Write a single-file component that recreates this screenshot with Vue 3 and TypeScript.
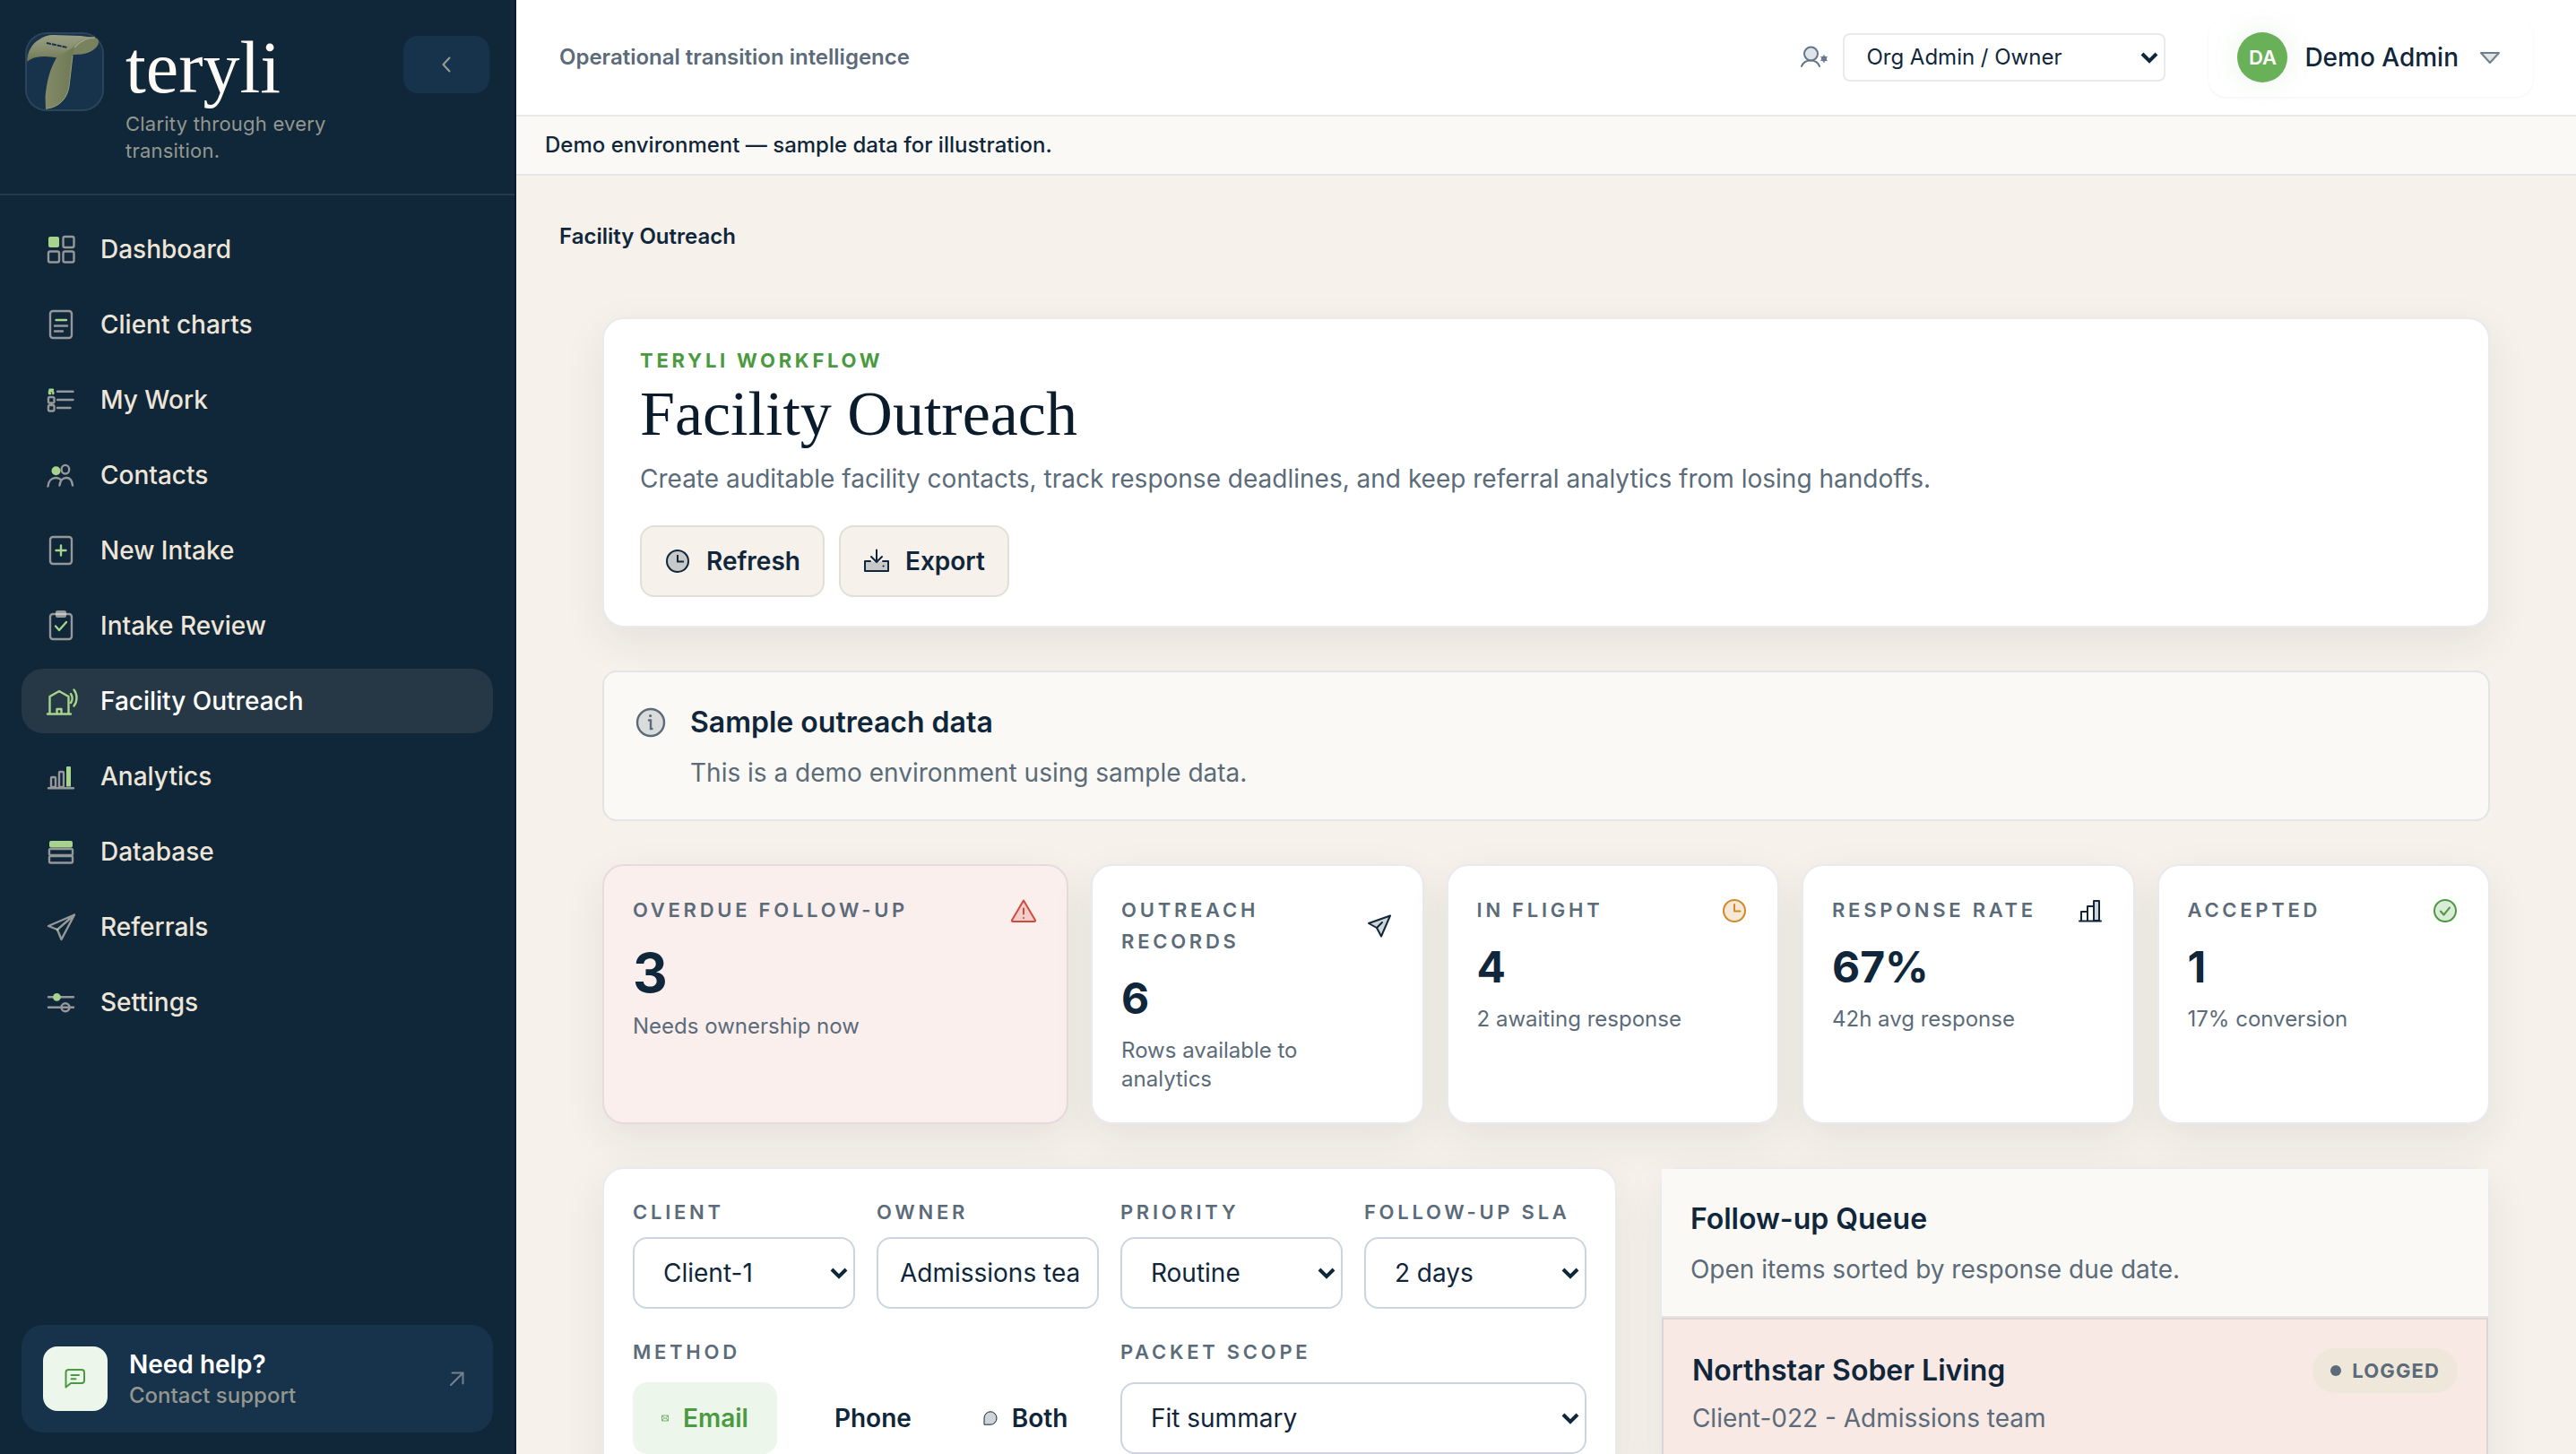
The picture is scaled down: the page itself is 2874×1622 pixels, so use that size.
<script setup lang="ts">
import { ref } from 'vue'

interface NavItem {
  label: string
  line: string
  accent?: string
  accentFill?: string
  lineFill?: string
}

interface Metric {
  label: string
  value: string
  note: string
  icon: 'alert' | 'send' | 'clock' | 'bars' | 'check'
  tone: string
  lead?: boolean
}

const navItems: NavItem[] = [
  {
    label: 'Dashboard',
    line: 'M24.5 6h8a2 2 0 0 1 2 2v8a2 2 0 0 1-2 2h-8a2 2 0 0 1-2-2v-8a2 2 0 0 1 2-2zM8 22.5h8a2 2 0 0 1 2 2v8a2 2 0 0 1-2 2h-8a2 2 0 0 1-2-2v-8a2 2 0 0 1 2-2zM24.5 22.5h8a2 2 0 0 1 2 2v8a2 2 0 0 1-2 2h-8a2 2 0 0 1-2-2v-8a2 2 0 0 1 2-2z',
    accentFill: 'M8 6h8a2 2 0 0 1 2 2v8a2 2 0 0 1-2 2h-8a2 2 0 0 1-2-2v-8a2 2 0 0 1 2-2z',
  },
  {
    label: 'Client charts',
    line: 'M11 5h18a3 3 0 0 1 3 3v24a3 3 0 0 1-3 3h-18a3 3 0 0 1-3-3v-24a3 3 0 0 1 3-3zM13 21.5h14M13 27.5h9',
    accent: 'M14.5 15h11.5',
  },
  {
    label: 'My Work',
    line: 'M16 10.7h17.500M16 20h17.500M16 29h14.500M7.500 17h3.500a1.500 1.500 0 0 1 1.500 1.500v3.500a1.500 1.500 0 0 1-1.500 1.500h-3.500a1.500 1.500 0 0 1-1.500-1.500v-3.500a1.500 1.500 0 0 1 1.500-1.500zM7.500 26h3.500a1.500 1.500 0 0 1 1.500 1.500v3.500a1.500 1.500 0 0 1-1.500 1.500h-3.500a1.500 1.500 0 0 1-1.500-1.500v-3.500a1.500 1.500 0 0 1 1.500-1.500z',
    accent: 'M7 10.500v2.500h1.200M11.300 11.500v1.500M7.500 8.800h3.500l-2 1.700',
  },
  {
    label: 'Contacts',
    line: 'M5.500 32.500c.5-6 4-9.500 9-9.500 2 0 4 .8 5.500 2.200M18.500 31.500c.5-5 3.500-8.500 7.500-8.500s6.500 3.500 7 8.500M29.200 13.700a4.300 4.800 0 1 1-8.600 0a4.300 4.800 0 1 1 8.600 0z',
    accentFill: 'M19.500 15.300a5 5 0 1 1-10 0a5 5 0 1 1 10 0z',
  },
  {
    label: 'New Intake',
    line: 'M11 5h18a3 3 0 0 1 3 3v24a3 3 0 0 1-3 3h-18a3 3 0 0 1-3-3v-24a3 3 0 0 1 3-3z',
    accent: 'M14.500 20h11M20 14.500v11',
  },
  {
    label: 'Intake Review',
    line: 'M11 7h18a3 3 0 0 1 3 3v22a3 3 0 0 1-3 3h-18a3 3 0 0 1-3-3v-22a3 3 0 0 1 3-3z',
    lineFill: 'M16 3h8a2 2 0 0 1 2 2v4a2 2 0 0 1-2 2h-8a2 2 0 0 1-2-2v-4a2 2 0 0 1 2-2z',
    accent: 'M14 20.500l4 4.500 8-9',
  },
  {
    label: 'Facility Outreach',
    line: '',
    accent: 'M5 34.500h26M7.500 34.500v-19.500l10.500-6 10.500 6v19.500M15.500 34.500v-5.500h5v5.500M31 12c2 3 2 7 0 10M34.500 7.500c4 5 4 13 0 18',
  },
  {
    label: 'Analytics',
    line: 'M6 33.300h28M10 21h3a1 1 0 0 1 1 1v10h-5v-10a1 1 0 0 1 1-1zM19 15h3a1 1 0 0 1 1 1v16h-5v-16a1 1 0 0 1 1-1z',
    accentFill: 'M27 9h3a1 1 0 0 1 1 1v21.500h-5v-21.500a1 1 0 0 1 1-1z',
  },
  {
    label: 'Database',
    line: 'M8.500 17h23a1.500 1.500 0 0 1 1.500 1.500v4a1.500 1.500 0 0 1-1.500 1.500h-23a1.500 1.500 0 0 1-1.500-1.500v-4a1.500 1.500 0 0 1 1.500-1.500zM8.500 25h23a1.500 1.500 0 0 1 1.500 1.500v4.500a1.500 1.500 0 0 1-1.500 1.500h-23a1.500 1.500 0 0 1-1.500-1.500v-4.500a1.500 1.500 0 0 1 1.500-1.500z',
    accentFill: 'M9 8h22a2 2 0 0 1 2 2v3.500a2 2 0 0 1-2 2h-22a2 2 0 0 1-2-2v-3.500a2 2 0 0 1 2-2z',
  },
  {
    label: 'Referrals',
    line: 'M35 6.500L6 19l10 4 4.500 11zM35 6.500L16 23',
    accent: 'M15.800 23h.4',
  },
  {
    label: 'Settings',
    line: 'M6 14.300h28M6 25.700h28M29.500 25.700a4.500 4.500 0 1 1-9 0a4.500 4.500 0 1 1 9 0z',
    accentFill: 'M19.800 14.300a4.400 4.400 0 1 1-8.800 0a4.400 4.400 0 1 1 8.800 0z',
  },
]

const metrics: Metric[] = [
  { label: 'Overdue follow-up', value: '3', note: 'Needs ownership now', icon: 'alert', tone: '#d04a3e', lead: true },
  { label: 'Outreach records', value: '6', note: 'Rows available to analytics', icon: 'send', tone: '#10263a' },
  { label: 'In flight', value: '4', note: '2 awaiting response', icon: 'clock', tone: '#cf8a2c' },
  { label: 'Response rate', value: '67%', note: '42h avg response', icon: 'bars', tone: '#10263a' },
  { label: 'Accepted', value: '1', note: '17% conversion', icon: 'check', tone: '#4a9a3f' },
]

const activeNav = ref('Facility Outreach')
const role = ref('Org Admin / Owner')
const client = ref('Client-1')
const owner = ref('Admissions team')
const priority = ref('Routine')
const sla = ref('2 days')
const scope = ref('Fit summary')
const method = ref('Email')
</script>

<template>
  <div class="shell">
    <aside class="sidebar">
      <div class="brand">
        <svg class="logo" viewBox="0 0 88 88" aria-hidden="true">
          <defs>
            <linearGradient id="ribbon-arm" x1="0" y1="0" x2="0" y2="1">
              <stop offset="0" stop-color="#9a9f84" />
              <stop offset="0.550" stop-color="#868d6d" />
              <stop offset="1" stop-color="#6c7652" />
            </linearGradient>
            <linearGradient id="ribbon-stem" x1="0" y1="0" x2="1" y2="0">
              <stop offset="0" stop-color="#828a68" />
              <stop offset="1" stop-color="#6f7955" />
            </linearGradient>
          </defs>
          <path d="M2.300 33C2 22 8 12 16 8C21 4.500 25 3 32 3L62 4L77 6L56 24.700L36 28.500C28 27 20 26.500 12 28C8 29 5 30.500 2.300 33z" fill="url(#ribbon-arm)" />
          <path d="M52 18C60 9 68 5 77 5.700C83 7 83 12 80 16C75 22 66 25.500 54 24.700z" fill="#78825f" />
          <path d="M55 17C62 9 70 5.500 78 6" fill="none" stroke="#a0a587" stroke-width="1.500" />
          <path d="M35 28.500L55 16L53 27L49 60.700C47 74 38 84 23 85.700L22.500 72C24 55 28 40 35 28.500z" fill="url(#ribbon-stem)" />
          <path d="M53 26L49 60.700C47 74 38 83.500 23.500 85.200" fill="none" stroke="#979c7e" stroke-width="1" />
          <path d="M24 12L47 17" fill="none" stroke="#17324b" stroke-width="2" stroke-dasharray="5 1" />
        </svg>
        <div class="brand-text">
          <span class="wordmark">teryli</span>
          <span class="tagline">Clarity through every transition.</span>
        </div>
        <button class="collapse" type="button" aria-label="Collapse navigation">
          <svg width="40" height="40" viewBox="0 0 40 40" fill="none" stroke="#989c9b" stroke-width="2" stroke-linecap="round" stroke-linejoin="round"><path d="M23.500 12.500L16.500 20l7 7.500" /></svg>
        </button>
      </div>

      <nav class="nav">
        <a v-for="item in navItems" :key="item.label" href="#" class="nav-link" :class="{ active: item.label === activeNav }" @click.prevent="activeNav = item.label">
          <svg width="40" height="40" viewBox="0 0 40 40" fill="none" stroke-width="2.400" stroke-linecap="round" stroke-linejoin="round" aria-hidden="true">
            <path v-if="item.line" :d="item.line" stroke="#ede5d8" stroke-opacity="0.600" />
            <path v-if="item.lineFill" :d="item.lineFill" fill="#ede5d8" fill-opacity="0.600" />
            <path v-if="item.accent" :d="item.accent" stroke="#a8d38d" />
            <path v-if="item.accentFill" :d="item.accentFill" fill="#a8d38d" />
          </svg>
          <span>{{ item.label }}</span>
        </a>
      </nav>

      <a href="#" class="help" @click.prevent>
        <span class="help-icon">
          <svg width="32" height="32" viewBox="0 0 32 32" fill="none" stroke="#4a9a3f" stroke-width="2" stroke-linecap="round" stroke-linejoin="round"><path d="M8 6h15a3 3 0 0 1 3 3v9a3 3 0 0 1-3 3h-12l-5.500 4.500v-16.500a3 3 0 0 1 2.500-3zM11.500 12h8.500M11.500 16.200h5" /></svg>
        </span>
        <span class="help-text">
          <strong>Need help?</strong>
          <span>Contact support</span>
        </span>
        <svg width="32" height="32" viewBox="0 0 32 32" fill="none" stroke="#74838e" stroke-width="2" stroke-linecap="round"><path d="M9 23L22.500 9.500M10.500 9.500h12v12" /></svg>
      </a>
    </aside>

    <div class="main">
      <header class="topbar">
        <span class="topbar-title">Operational transition intelligence</span>
        <div class="topbar-right">
          <div class="role">
            <label for="role" aria-label="Role">
              <svg width="32" height="32" viewBox="0 0 32 32" fill="none" stroke="#64748b" stroke-width="2" stroke-linecap="round" aria-hidden="true"><circle cx="12.500" cy="12" r="7.500" fill="#64748b" fill-opacity="0.200" /><path d="M2 26c1.500-4 5-6.500 10-6.500s8.500 2.500 10 6.500" /><circle cx="27" cy="17.500" r="2" /><path d="M27 13.500v8M23.800 15.500l6.400 4M30.200 15.500l-6.400 4" stroke-width="1.200" /></svg>
            </label>
            <span class="select-wrap compact">
              <select id="role" v-model="role">
                <option>Org Admin / Owner</option>
                <option>Case Manager</option>
              </select>
              <svg class="caret" width="20" height="14" viewBox="0 0 20 14" fill="none" stroke="#10263a" stroke-width="4"><path d="M2 3l8 8 8-8" /></svg>
            </span>
          </div>
          <button class="profile" type="button">
            <span class="avatar">DA</span>
            <span>Demo Admin</span>
            <svg width="32" height="32" viewBox="0 0 32 32" fill="#6e7f8c" fill-opacity="0.200" stroke="#6e7f8c" stroke-width="2" stroke-linejoin="round"><path d="M6 11h20l-10 11z" /></svg>
          </button>
        </div>
      </header>

      <div class="banner">Demo environment — sample data for illustration.</div>
      <div class="crumb">Facility Outreach</div>

      <main class="content">
        <section class="card hero">
          <p class="eyebrow">Teryli workflow</p>
          <h1>Facility Outreach</h1>
          <p class="lede">Create auditable facility contacts, track response deadlines, and keep referral analytics from losing handoffs.</p>
          <div class="actions">
            <button type="button" class="btn">
              <svg width="32" height="32" viewBox="0 0 32 32" fill="none" stroke="#10263a" stroke-width="2"><circle cx="16" cy="16" r="12" fill="#10263a" fill-opacity="0.200" /><path d="M16 9v7.500h7" /></svg>
              Refresh
            </button>
            <button type="button" class="btn">
              <svg width="32" height="32" viewBox="0 0 32 32" fill="none" stroke="#10263a" stroke-width="2" stroke-linecap="round" stroke-linejoin="round"><path d="M9 16h-6v11h26v-11h-6l-7 1z" fill="#10263a" fill-opacity="0.200" stroke="none" /><path d="M9 16h-6v11h26v-11h-6M16 3.500v13M10 11l6 6 6-6M23.500 21.500h.2" /></svg>
              Export
            </button>
          </div>
        </section>

        <section class="notice">
          <svg width="36" height="36" viewBox="0 0 36 36" fill="none" stroke="#5b6b79" stroke-width="2.400" stroke-linecap="round"><circle cx="18" cy="18" r="15" fill="#5b6b79" fill-opacity="0.200" /><path d="M16 15.500h2v9.500h1.500" /><path d="M17.500 10.500h.2" stroke-width="3" /></svg>
          <div>
            <h2>Sample outreach data</h2>
            <p>This is a demo environment using sample data.</p>
          </div>
        </section>

        <section class="metrics">
          <article v-for="m in metrics" :key="m.label" class="card metric" :class="{ lead: m.lead }">
            <div class="metric-head">
              <h3>{{ m.label }}</h3>
              <svg width="32" height="32" viewBox="0 0 32 32" fill="none" :stroke="m.tone" stroke-width="2" stroke-linecap="round" stroke-linejoin="round" aria-hidden="true">
                <template v-if="m.icon === 'alert'">
                  <path d="M16 4.500l13 22a1 1 0 0 1-1 1.500h-24a1 1 0 0 1-1-1.500z" :fill="m.tone" fill-opacity="0.200" />
                  <path d="M16 13.500v6M16 24h.1" />
                </template>
                <template v-else-if="m.icon === 'send'">
                  <path d="M28 4.500L4 13l9 5 5 9.500z" :fill="m.tone" fill-opacity="0.200" />
                  <path d="M13 18l6-6" />
                </template>
                <template v-else-if="m.icon === 'clock'">
                  <circle cx="16" cy="16" r="12" :fill="m.tone" fill-opacity="0.200" />
                  <path d="M16 9v7.500h6.500" />
                </template>
                <template v-else-if="m.icon === 'bars'">
                  <path d="M20 27v-22h6v22z" :fill="m.tone" fill-opacity="0.200" />
                  <path d="M4 27.500h24M6 27v-10h7M13 27v-16h7" />
                </template>
                <template v-else>
                  <circle cx="16" cy="16" r="12" :fill="m.tone" fill-opacity="0.200" />
                  <path d="M11 16.500l3.500 4 6.500-8" />
                </template>
              </svg>
            </div>
            <p class="value">{{ m.value }}</p>
            <p class="note">{{ m.note }}</p>
          </article>
        </section>

        <section class="columns">
          <form class="card form" @submit.prevent>
            <div class="field">
              <label for="client">Client</label>
              <span class="select-wrap">
                <select id="client" v-model="client"><option>Client-1</option><option>Client-022</option></select>
                <svg class="caret" width="20" height="14" viewBox="0 0 20 14" fill="none" stroke="#10263a" stroke-width="4"><path d="M2 3l8 8 8-8" /></svg>
              </span>
            </div>
            <div class="field">
              <label for="owner">Owner</label>
              <input id="owner" v-model="owner" type="text" />
            </div>
            <div class="field">
              <label for="priority">Priority</label>
              <span class="select-wrap">
                <select id="priority" v-model="priority"><option>Routine</option><option>Urgent</option></select>
                <svg class="caret" width="20" height="14" viewBox="0 0 20 14" fill="none" stroke="#10263a" stroke-width="4"><path d="M2 3l8 8 8-8" /></svg>
              </span>
            </div>
            <div class="field">
              <label for="sla">Follow-up SLA</label>
              <span class="select-wrap">
                <select id="sla" v-model="sla"><option>2 days</option><option>5 days</option></select>
                <svg class="caret" width="20" height="14" viewBox="0 0 20 14" fill="none" stroke="#10263a" stroke-width="4"><path d="M2 3l8 8 8-8" /></svg>
              </span>
            </div>
            <div class="field wide" role="group" aria-labelledby="method-label">
              <span id="method-label" class="label">Method</span>
              <div class="methods">
                <button type="button" :class="{ on: method === 'Email' }" :aria-pressed="method === 'Email'" @click="method = 'Email'">
                  <svg width="8" height="8" viewBox="0 0 8 8" fill="none" stroke="currentColor" stroke-width="1" stroke-opacity="0.700"><path d="M.5 1h7v6h-7zM.5 1l3.500 3.500 3.500-3.500M.5 7l2.500-3M7.500 7l-2.500-3" /></svg>
                  Email
                </button>
                <button type="button" :class="{ on: method === 'Phone' }" :aria-pressed="method === 'Phone'" @click="method = 'Phone'">
                  <svg width="0" height="8" />
                  Phone
                </button>
                <button type="button" :class="{ on: method === 'Both' }" :aria-pressed="method === 'Both'" @click="method = 'Both'">
                  <svg width="16" height="16" viewBox="0 0 16 16" fill="currentColor" fill-opacity="0.200" stroke="currentColor" stroke-width="1"><path d="M1 15.200v-7.200a7 7.200 0 1 1 7 7.200z" /></svg>
                  Both
                </button>
              </div>
            </div>
            <div class="field wide">
              <label for="scope">Packet scope</label>
              <span class="select-wrap">
                <select id="scope" v-model="scope"><option>Fit summary</option><option>Full packet</option></select>
                <svg class="caret" width="20" height="14" viewBox="0 0 20 14" fill="none" stroke="#10263a" stroke-width="4"><path d="M2 3l8 8 8-8" /></svg>
              </span>
            </div>
          </form>

          <section class="card queue">
            <header class="queue-head">
              <h2>Follow-up Queue</h2>
              <p>Open items sorted by response due date.</p>
            </header>
            <article class="queue-item">
              <div class="queue-row">
                <h3>Northstar Sober Living</h3>
                <span class="badge"><i></i>Logged</span>
              </div>
              <p>Client-022 - Admissions team</p>
            </article>
          </section>
        </section>
      </main>
    </div>
  </div>
</template>

<style>
body {
  margin: 0;
  background: #f6f1eb;
}
</style>

<style scoped>
* {
  box-sizing: border-box;
}

.shell {
  display: flex;
  height: 100vh;
  overflow: hidden;
  font-family: Inter, "Liberation Sans", sans-serif;
  font-size: 28px;
  line-height: 44px;
  color: #10263a;
  background: #f6f1eb;
}

h1, h2, h3, p {
  margin: 0;
}

svg {
  flex: none;
  display: block;
}

button, select, input {
  font: inherit;
  color: inherit;
}

/* Sidebar */
.sidebar {
  flex: none;
  width: 576px;
  display: flex;
  flex-direction: column;
  background: #102639;
  border-right: 2px solid #0a1c2c;
}

.brand {
  display: flex;
  align-items: flex-start;
  height: 218px;
  padding: 36px 28px 0;
  border-bottom: 2px solid #263a49;
}

.logo {
  width: 88px;
  height: 88px;
  border-radius: 24px;
  background: #17324b;
  box-shadow: inset 0 0 0 2px #2c4358;
}

.brand-text {
  flex: 1;
  display: flex;
  flex-direction: column;
  margin-left: 24px;
}

.wordmark {
  font-family: "Liberation Serif", serif;
  font-size: 82px;
  line-height: 79px;
  color: #fdfaf6;
}

.tagline {
  width: 250px;
  margin-top: 8px;
  font-size: 22px;
  line-height: 30px;
  letter-spacing: 0.01em;
  color: #93978f;
}

.collapse {
  display: grid;
  place-items: center;
  width: 96px;
  height: 64px;
  margin-top: 4px;
  padding: 0;
  border: 0;
  border-radius: 16px;
  background: #17324b;
}

.nav {
  flex: 1;
  display: flex;
  flex-direction: column;
  gap: 12px;
  padding: 24px;
}

.nav-link {
  display: flex;
  align-items: center;
  gap: 24px;
  height: 72px;
  padding: 0 24px;
  border-radius: 24px;
  font-weight: 500;
  color: #ede5d8;
  text-decoration: none;
}

.nav-link.active {
  background: #263845;
  color: #ffffff;
}

.help {
  display: flex;
  align-items: center;
  gap: 24px;
  height: 120px;
  margin: 0 24px 24px;
  padding: 0 24px;
  border-radius: 24px;
  background: #17324b;
  text-decoration: none;
}

.help-icon {
  display: grid;
  place-items: center;
  width: 72px;
  height: 72px;
  border-radius: 16px;
  background: #edf6ea;
}

.help-text {
  flex: 1;
  display: flex;
  flex-direction: column;
  padding-top: 2px;
  font-size: 24px;
  font-weight: 500;
  line-height: 34px;
  color: #93978f;
}

.help-text strong {
  font-size: 28px;
  font-weight: 600;
  line-height: 36px;
  color: #ffffff;
}

/* Top area */
.main {
  flex: 1;
  min-width: 0;
  overflow-y: auto;
  scrollbar-width: none;
}

.topbar {
  display: flex;
  align-items: center;
  justify-content: space-between;
  height: 130px;
  padding: 0 48px;
  background: #ffffff;
  border-bottom: 2px solid #e7eae9;
}

.topbar-title {
  font-size: 24px;
  font-weight: 600;
  color: #5b6b79;
}

.topbar-right,
.role {
  display: flex;
  align-items: center;
}

.topbar-right {
  gap: 48px;
}

.role {
  gap: 16px;
}

.select-wrap {
  position: relative;
  display: block;
}

select,
input {
  display: block;
  width: 100%;
  height: 80px;
  margin: 0;
  border: 2px solid #cbd5e1;
  border-radius: 16px;
  background: #ffffff;
  appearance: none;
  outline: none;
}

select {
  padding: 0 40px 0 32px;
}

input {
  padding: 0 20px 0 24px;
}

.compact {
  width: 360px;
}

.compact select {
  height: 54px;
  padding: 0 40px 0 24px;
  border-color: #e9ebeb;
  border-radius: 8px;
  font-size: 24px;
}

.caret {
  position: absolute;
  right: 8px;
  top: 50%;
  margin-top: -7px;
  pointer-events: none;
}

.profile {
  display: flex;
  align-items: center;
  gap: 19px;
  height: 88px;
  padding: 0 32px;
  border: 0;
  border-radius: 20px;
  background: #ffffff;
  box-shadow: 0 1px 3px rgba(16, 38, 58, 0.06);
  font-weight: 500;
}

.avatar {
  display: grid;
  place-items: center;
  width: 56px;
  height: 56px;
  border-radius: 50%;
  background: #68b158;
  box-shadow: 0 0 32px rgba(74, 154, 63, 0.12);
  color: #ffffff;
  font-size: 22px;
  font-weight: 600;
}

.banner {
  height: 66px;
  padding: 0 32px;
  border-bottom: 2px solid #e3e6e4;
  background: #faf9f5;
  font-size: 24px;
  font-weight: 500;
  line-height: 64px;
}

.crumb {
  padding: 46px 48px 0;
  font-size: 24px;
  font-weight: 600;
}

.content {
  display: flex;
  flex-direction: column;
  gap: 48px;
  padding: 68px 96px 48px;
}

.card {
  border: 2px solid #e8eaed;
  border-radius: 24px;
  background: #ffffff;
  box-shadow: 0 16px 48px rgba(26, 51, 32, 0.08);
}

/* Hero */
.hero {
  padding: 28px 40px 32px;
}

.eyebrow {
  font-size: 22px;
  font-weight: 700;
  line-height: 36px;
  letter-spacing: 0.17em;
  text-transform: uppercase;
  color: #4a9a3f;
}

h1 {
  font-family: "Liberation Serif", serif;
  font-size: 70px;
  font-weight: 400;
  line-height: 84px;
  color: #0a1c2c;
}

.lede {
  margin-top: 8px;
  color: #5b6b79;
}

.actions {
  display: flex;
  gap: 16px;
  margin-top: 30px;
}

.btn {
  display: flex;
  align-items: center;
  gap: 16px;
  height: 80px;
  padding: 0 25px 0 24px;
  border: 2px solid #e2dfd8;
  border-radius: 16px;
  background: #f6f1eb;
  font-weight: 600;
}

/* Notice */
.notice {
  display: flex;
  gap: 26px;
  padding: 32px 34px 30px;
  border: 2px solid #e3e5e2;
  border-radius: 16px;
  background: #faf9f5;
}

.notice svg {
  margin-top: 6px;
}

h2 {
  font-size: 32px;
  font-weight: 600;
  line-height: 48px;
}

.notice p,
.queue-head p {
  margin-top: 10px;
  color: #5b6b79;
}

/* Metrics */
.metrics {
  display: grid;
  grid-template-columns: 1.4fr repeat(4, 1fr);
  gap: 25px;
}

.metric {
  padding: 32px;
}

.metric.lead {
  background: #fbefee;
  border-color: #e6dadc;
}

.metric-head {
  display: flex;
  align-items: center;
  justify-content: space-between;
  gap: 16px;
}

.metric h3,
.form label,
.label {
  font-size: 22px;
  font-weight: 600;
  line-height: 35px;
  letter-spacing: 0.17em;
  text-transform: uppercase;
  color: #5b6b79;
}

.value {
  margin-top: 22px;
  font-size: 48px;
  font-weight: 700;
  line-height: 48px;
}

.lead .value {
  font-size: 60px;
  line-height: 60px;
}

.note {
  max-width: 12em;
  margin-top: 18px;
  font-size: 24px;
  line-height: 32px;
  color: #5b6b79;
}

.lead .note {
  margin-top: 14px;
}

/* Lower columns */
.columns {
  display: grid;
  grid-template-columns: 1.1fr 0.9fr;
  gap: 48px;
}

.form {
  display: grid;
  grid-template-columns: repeat(4, minmax(0, 1fr));
  gap: 32px 24px;
  padding: 32px;
}

.field {
  display: flex;
  flex-direction: column;
  gap: 12px;
}

.form label,
.label {
  line-height: 32px;
  white-space: nowrap;
}

.field.wide {
  grid-column: span 2;
  gap: 18px;
}

.methods {
  display: flex;
  gap: 16px;
}

.methods button {
  display: flex;
  align-items: center;
  gap: 16px;
  height: 80px;
  padding: 0 32px;
  border: 0;
  border-radius: 16px;
  background: transparent;
  font-weight: 600;
}

.methods .on {
  background: #edf6ea;
  color: #4a9a3f;
}

.queue-head {
  padding: 32px 32px 30px;
  border-bottom: 2px solid #e3e5e1;
  background: #faf9f5;
}

.queue-item {
  padding: 32px;
  border: 2px solid #e0d5d6;
  background: #f8e9e5;
}

.queue-item p {
  margin-top: 6px;
  color: #5b6b79;
}

.queue-row {
  display: flex;
  align-items: center;
  justify-content: space-between;
  height: 50px;
}

.queue-row h3 {
  font-size: 32px;
  font-weight: 600;
}

.badge {
  display: flex;
  align-items: center;
  gap: 12px;
  height: 50px;
  padding: 0 20px;
  border-radius: 25px;
  background: #efe8da;
  font-size: 22px;
  font-weight: 700;
  letter-spacing: 0.05em;
  text-transform: uppercase;
  color: #5b6b79;
}

.badge i {
  width: 12px;
  height: 12px;
  border-radius: 50%;
  background: #5b6b79;
}
</style>
